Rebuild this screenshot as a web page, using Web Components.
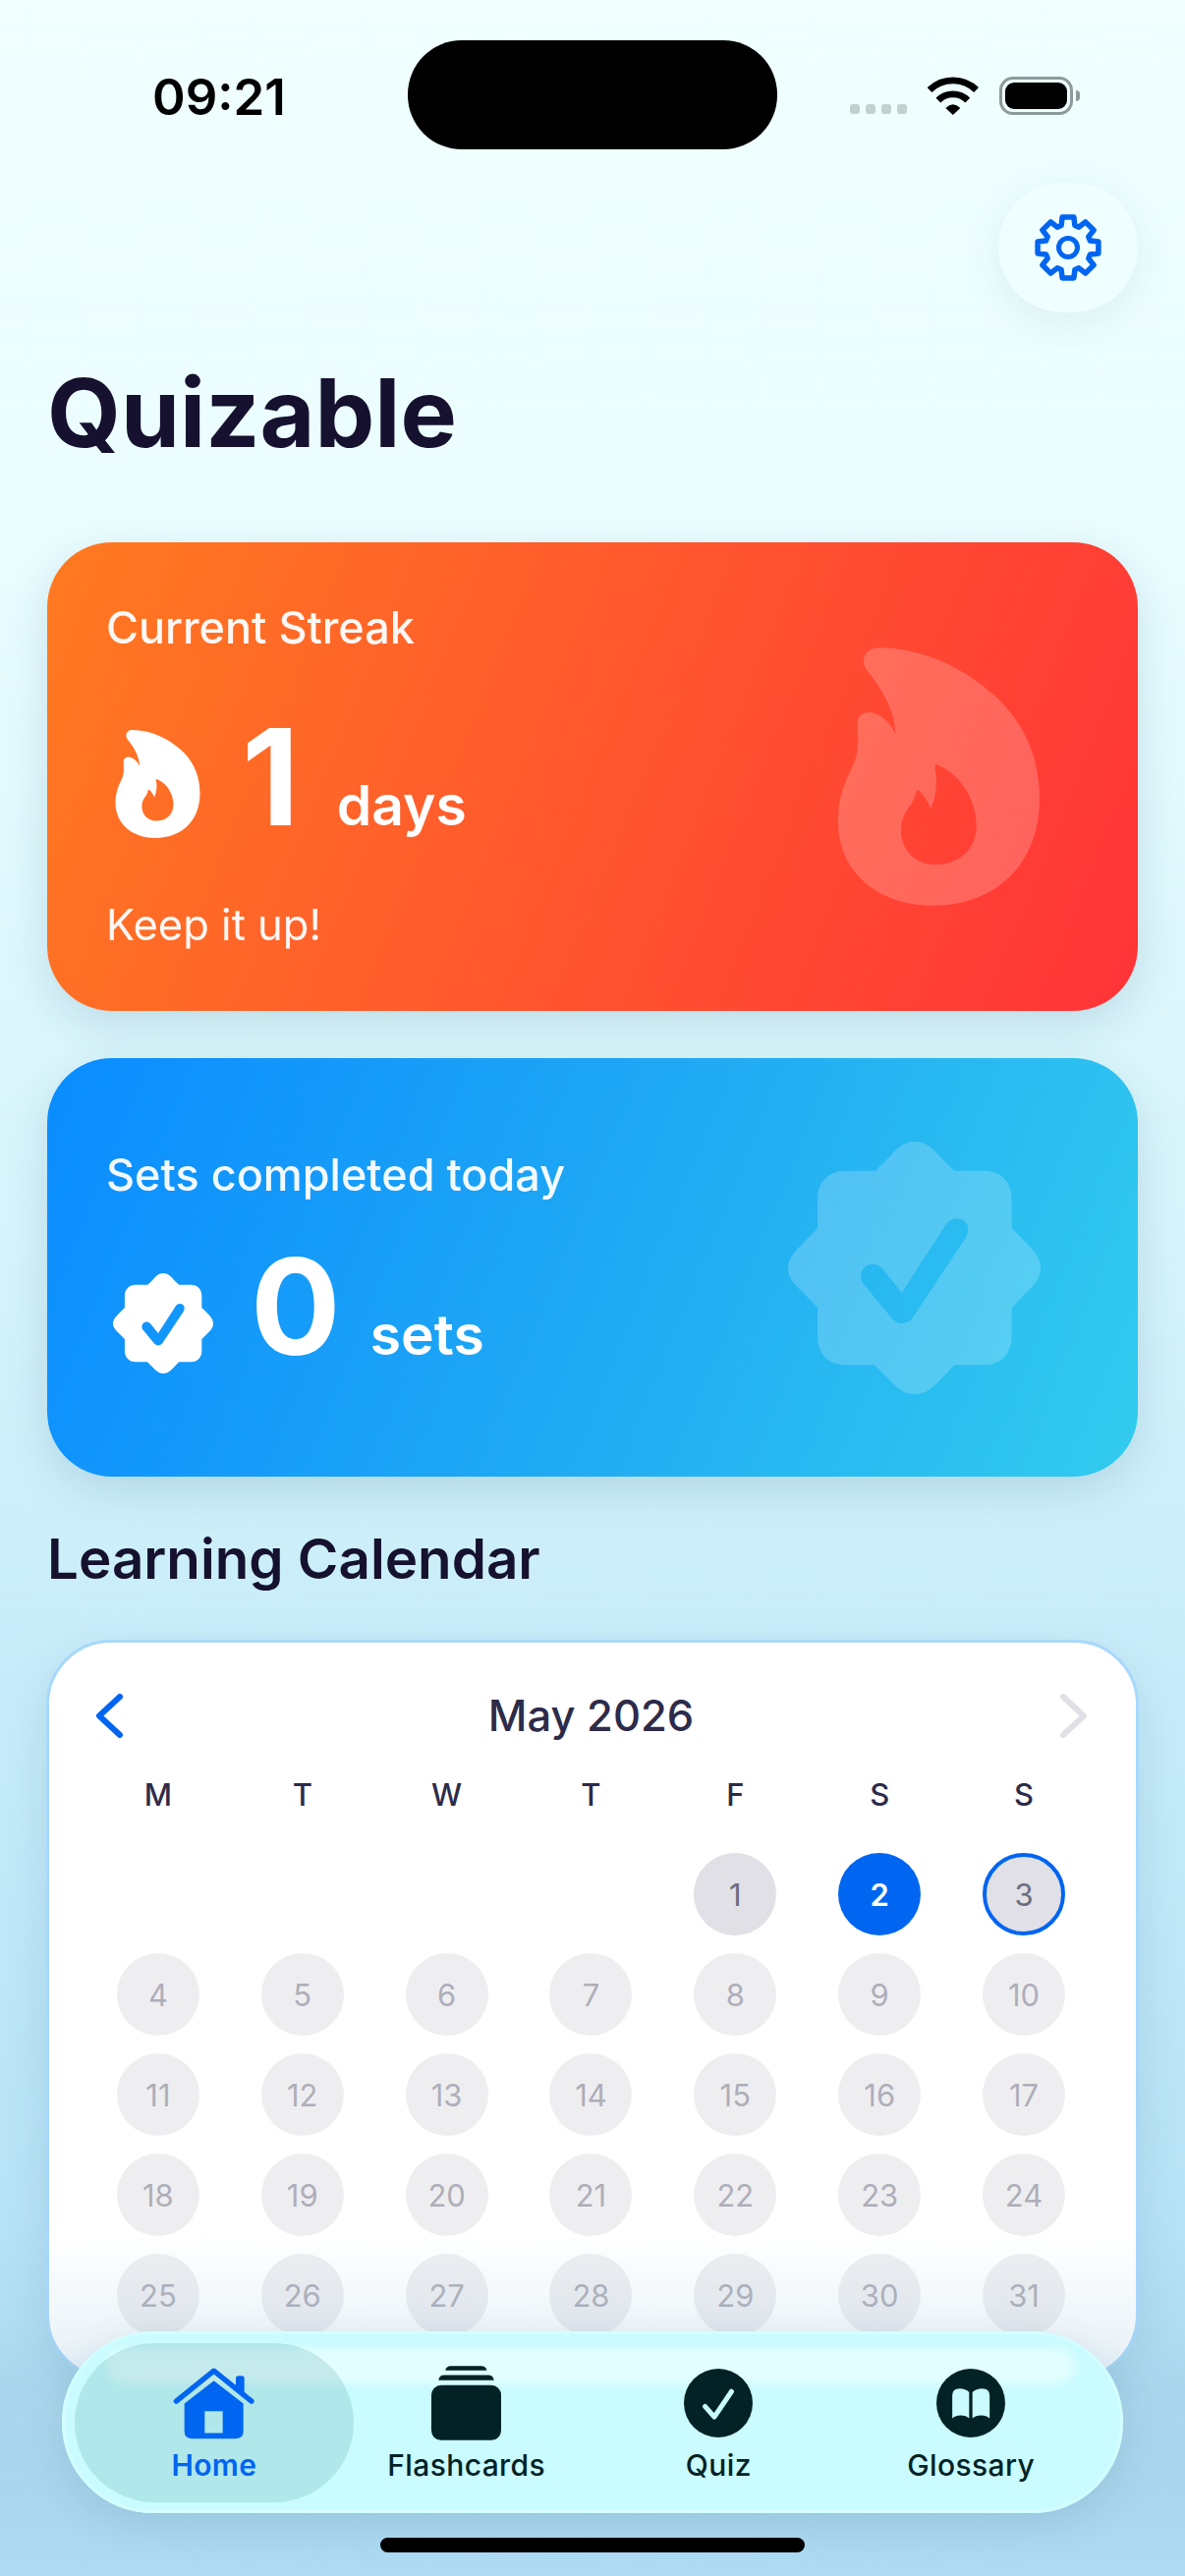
<!DOCTYPE html>
<html lang="en">
<head>
<meta charset="utf-8">
<title>Quizable</title>
<style>
    html, body { margin: 0; padding: 0; }
    body { width: 1206px; height: 2622px; overflow: hidden; font-family: Inter, "Liberation Sans", sans-serif; }
</style>
</head>
<body>
<quiz-app>
    <status-bar></status-bar>
    <settings-button></settings-button>
    <page-title>Quizable</page-title>
    <stat-card kind="streak">
        <span slot="label">Current Streak</span>
        <span slot="value">1</span>
        <span slot="unit">days</span>
        <span slot="note">Keep it up!</span>
    </stat-card>
    <stat-card kind="sets">
        <span slot="label">Sets completed today</span>
        <span slot="value">0</span>
        <span slot="unit">sets</span>
    </stat-card>
    <section-title>Learning Calendar</section-title>
    <learning-calendar month="May 2026"></learning-calendar>
    <tab-bar slot="overlay">
        <tab-item icon="home" active>Home</tab-item>
        <tab-item icon="cards">Flashcards</tab-item>
        <tab-item icon="quiz">Quiz</tab-item>
        <tab-item icon="book">Glossary</tab-item>
    </tab-bar>
</quiz-app>

<script>
// all icons are drawn in the coordinates of the crop they were traced from
const FLAME = `M345 58C480 58 620 125 720 225C800 310 835 410 835 520C835 720 700 845 510 845C340 845 220 740 220 590C220 500 250 450 268 410C285 370 280 330 279 290C279 265 295 255 315 255C345 255 378 285 395 320C395 250 350 180 318 140C305 125 298 115 298 100C298 72 318 58 345 58Z
M520 415C590 440 642 520 642 600C642 675 590 720 515 720C455 720 412 675 412 615C412 580 425 560 440 540C450 525 455 510 458 498C460 490 466 492 470 497C482 510 495 530 503 548C515 525 520 490 520 460C519 445 516 432 516 422C516 416 518 414 520 415Z`;
const BADGE = `M452 66C490 66 510 90 535 118L573 155L665 155C715 155 748 190 748 240L748 330L790 372C815 398 836 420 836 452C836 485 815 505 790 530L748 572L748 662C748 712 715 747 665 747L573 747L535 787C510 812 490 836 452 836C415 836 395 812 370 787L330 747L240 747C190 747 156 712 156 662L156 572L115 530C90 505 66 485 66 452C66 420 90 398 115 372L156 330L156 240C156 190 190 155 240 155L332 155L370 118C395 90 415 66 452 66Z
M296 500C280 478 290 450 312 442C330 436 345 443 355 455L413 527L545 322C555 305 575 295 595 303C618 313 620 340 607 360L448 600C438 615 425 620 413 620C400 620 390 612 380 602Z`;

function gearPath(cx, cy, outer, inner) {
    // eight teeth, one every 45 degrees
    let d = '';
    for (let i = 0; i < 8; i++) {
        const a = i * Math.PI / 4 - Math.PI / 2;
        const pts = [[inner, -0.30], [outer, -0.19], [outer, 0.19], [inner, 0.30]];
        for (const [r, o] of pts) {
            const x = cx + r * Math.cos(a + o), y = cy + r * Math.sin(a + o);
            d += (d ? 'L' : 'M') + x.toFixed(1) + ' ' + y.toFixed(1);
        }
    }
    return d + 'Z';
}

const ICONS = {
    flame: {box: '220 58 615 787', body: `<path fill="currentColor" fill-rule="evenodd" d="${FLAME}"/>`},
    badge: {box: '66 66 770 770', body: `<path fill="currentColor" fill-rule="evenodd" d="${BADGE}"/>`},
    gear: {box: '0 0 70 70', body: `<path fill="none" stroke="currentColor" stroke-width="5.5" stroke-linejoin="round" d="${gearPath(35, 35, 31.5, 23.5)}"/><circle cx="35" cy="35" r="9.5" fill="none" stroke="currentColor" stroke-width="5"/>`},
    home: {box: '345 110 255 230', body: `<path fill="none" stroke="currentColor" stroke-width="16" stroke-linecap="round" stroke-linejoin="round" d="M358 218L473 125L588 218"/><path fill="currentColor" d="M540 185V148Q540 140 548 140H558Q566 140 566 148V205Z"/><path fill="currentColor" fill-rule="evenodd" d="M383 225L473 155L563 225V310Q563 332 541 332H405Q383 332 383 310ZM445 248V315H500V248Z"/>`},
    cards: {box: '1140 108 214 228', body: `<path fill="currentColor" d="M1183 122Q1185 108 1200 108H1293Q1308 108 1310 122ZM1162 152Q1164 136 1180 136H1314Q1330 136 1332 152Z"/><rect x="1140" y="167" width="214" height="169" rx="30" fill="currentColor"/>`},
    quiz: {box: '231 121 208 208', body: `<circle cx="335" cy="225" r="104" fill="currentColor"/><path fill="none" stroke="#c9fbff" stroke-width="15" stroke-linecap="round" stroke-linejoin="round" d="M295 235L323 267L375 190"/>`},
    book: {box: '1002 121 208 208', body: `<circle cx="1106" cy="225" r="104" fill="currentColor"/><path fill="#c9fbff" d="M1050 202Q1050 181 1072 181Q1091 181 1101 192V271Q1092 262 1075 262Q1060 262 1050 271ZM1163 202Q1163 181 1141 181Q1122 181 1111 192V271Q1120 262 1138 262Q1153 262 1163 271Z"/>`},
};

class AppIcon extends HTMLElement {
    connectedCallback() {
        const icon = ICONS[this.getAttribute('name')];
        this.attachShadow({mode: 'open'});
        this.shadowRoot.innerHTML = `
            <style>
            :host { display: block; }
            svg { display: block; width: 100%; height: 100%; }
            </style>
            <svg viewBox="${icon.box}" xmlns="http://www.w3.org/2000/svg">${icon.body}</svg>
        `;
    }
}

class QuizApp extends HTMLElement {
    constructor() {
        super();
        this.attachShadow({mode: 'open'});
        this.shadowRoot.innerHTML = `
            <style>
            :host {
                display: flex;
                flex-direction: column;
                position: relative;
                width: 1206px;
                height: 2622px;
                box-sizing: border-box;
                padding: 0 48px;
                overflow: hidden;
                background: linear-gradient(180deg, #f0ffff 0%, #ebfdff 20%, #d4f3fb 50%, #bfe8f8 75%, #b0dcf4 100%);
            }
            /* edge fade over the scrolled content, under the tab bar */
            .fade {
                position: absolute;
                left: 0;
                right: 0;
                bottom: 0;
                height: 350px;
                pointer-events: none;
                background: linear-gradient(180deg, rgba(150,195,220,0) 0%, rgba(150,195,220,.17) 30%, rgba(150,195,220,.33) 44%, rgba(150,195,220,.28) 75%, rgba(160,205,232,.1) 100%);
            }
            .home-bar {
                position: absolute;
                left: 387px;
                top: 2583px;
                width: 432px;
                height: 15px;
                border-radius: 8px;
                background: #000;
            }
            </style>
            <slot></slot>
            <div class="fade"></div>
            <slot name="overlay"></slot>
            <div class="home-bar"></div>
        `;
    }
}

class StatusBar extends HTMLElement {
    constructor() {
        super();
        this.attachShadow({mode: 'open'});
        this.shadowRoot.innerHTML = `
            <style>
            :host {
                display: block;
                margin: 0 -48px;
                padding-top: 41px;
            }
            .row {
                display: grid;
                grid-template-columns: 415px 376px 1fr;
                height: 111px;
            }
            .time {
                font: 600 51px/1 Inter, "Liberation Sans", sans-serif;
                color: #000;
                padding: 32px 0 0 155px;
            }
            .island { background: #000; border-radius: 55px; }
            .right { position: relative; display: flex; padding: 37px 0 0 74px; align-items: flex-start; }
            .dots { display: flex; gap: 6px; margin-top: 28px; }
            .dots i { width: 10px; height: 10px; border-radius: 3px; background: #c2d0d0; }
            .wifi { width: 52px; height: 40px; margin-left: 21px; }
            .battery {
                box-sizing: border-box;
                width: 75px;
                height: 39px;
                margin-left: 21px;
                border: 3px solid #8e9a9a;
                border-radius: 14px;
                padding: 3px;
            }
            .battery b { display: block; height: 100%; background: #000; border-radius: 9px; }
            .cap { width: 4px; height: 11px; margin: 14px 0 0 3px; background: #8e9a9a; border-radius: 0 4px 4px 0; }
            </style>
            <div class="row">
                <div class="time">09:21</div>
                <div class="island"></div>
                <div class="right">
                    <div class="dots"><i></i><i></i><i></i><i></i></div>
                    <svg class="wifi" viewBox="375 114 153 116">
                        <path fill="none" stroke="#000" stroke-width="20" d="M381 153A100 100 0 0 1 521 153"/>
                        <path fill="none" stroke="#000" stroke-width="20" d="M407 184A62 62 0 0 1 495 184"/>
                        <path d="M429 207Q451 186 473 207L451 228Z"/>
                    </svg>
                    <div class="battery"><b></b></div>
                    <div class="cap"></div>
                </div>
            </div>
        `;
    }
}

class SettingsButton extends HTMLElement {
    constructor() {
        super();
        this.attachShadow({mode: 'open'});
        this.shadowRoot.innerHTML = `
            <style>
            :host {
                display: flex;
                align-items: center;
                justify-content: center;
                align-self: flex-end;
                width: 142px;
                height: 132px;
                margin-top: 34px;
                border-radius: 66px;
                background: #efffff;
                color: #0065f0;
                box-shadow: 0 10px 40px rgba(40,90,100,.09);
            }
            app-icon { width: 70px; height: 70px; }
            </style>
            <app-icon name="gear"></app-icon>
        `;
    }
}

class PageTitle extends HTMLElement {
    constructor() {
        super();
        this.attachShadow({mode: 'open'});
        this.shadowRoot.innerHTML = `
            <style>
            :host {
                display: block;
                margin-top: 44px;
                height: 118px;
                font: 700 96.5px/116px Inter, "Liberation Sans", sans-serif;
                color: #16112f;
            }
            </style>
            <slot></slot>
        `;
    }
}

class StatCard extends HTMLElement {
    constructor() {
        super();
        this.attachShadow({mode: 'open'});
        const streak = this.getAttribute('kind') === 'streak';
        const icon = streak ? 'flame' : 'badge';
        this.shadowRoot.innerHTML = `
            <style>
            :host {
                display: block;
                position: relative;
                box-sizing: border-box;
                margin-top: ${streak ? 72 : 48}px;
                padding: ${streak ? 60 : 92}px 60px ${streak ? 61 : 105}px;
                border-radius: 66px;
                color: #fff;
                background: ${streak
                    ? 'linear-gradient(112deg, #ff7a20 0%, #ff5a2d 45%, #ff3338 100%)'
                    : 'linear-gradient(112deg, #0a8cff 0%, #1fa8f4 50%, #32ccee 100%)'};
                box-shadow: 0 14px 44px rgba(40,90,120,.16);
            }
            .label { font: 500 45px/54px Inter, "Liberation Sans", sans-serif; opacity: .95; }
            .stat { display: flex; align-items: flex-start; margin-top: ${streak ? 57 : 39}px; height: 136px; }
            .small { flex: none; margin: ${streak ? '20px 0 0 9px' : '34px 0 0 7px'}; color: #fff; }
            .small.flame { width: 87px; height: 110px; }
            .small.badge { width: 102px; height: 102px; }
            .value { font: 700 136px/136px Inter, "Liberation Sans", sans-serif; margin-left: ${streak ? 42 : 38}px; }
            .unit { font: 600 57px/136px Inter, "Liberation Sans", sans-serif; margin-left: ${streak ? 38 : 30}px; }
            .baseline { display: flex; align-items: baseline; }
            .note { font: 400 43.5px/54px Inter, "Liberation Sans", sans-serif; margin-top: 55px; opacity: .95; }
            .mark { position: absolute; color: rgba(255,255,255,.2); }
            .mark.flame { right: 100px; top: 107px; width: 205px; height: 263px; }
            .mark.badge { right: 99px; top: 85px; width: 257px; height: 257px; }
            </style>
            <div class="label"><slot name="label"></slot></div>
            <div class="stat">
                <app-icon class="small ${icon}" name="${icon}"></app-icon>
                <div class="baseline">
                    <div class="value"><slot name="value"></slot></div>
                    <div class="unit"><slot name="unit"></slot></div>
                </div>
            </div>
            ${streak ? '<div class="note"><slot name="note"></slot></div>' : ''}
            <app-icon class="mark ${icon}" name="${icon}"></app-icon>
        `;
    }
}

class SectionTitle extends HTMLElement {
    constructor() {
        super();
        this.attachShadow({mode: 'open'});
        this.shadowRoot.innerHTML = `
            <style>
            :host {
                display: block;
                margin-top: 50px;
                font: 600 56.5px/68px Inter, "Liberation Sans", sans-serif;
                color: #16112f;
            }
            </style>
            <slot></slot>
        `;
    }
}

class LearningCalendar extends HTMLElement {
    connectedCallback() {
        this.attachShadow({mode: 'open'});
        const days = [];
        for (let i = 0; i < 4; i++) days.push('<span></span>');
        for (let d = 1; d <= 31; d++) {
            let cls = 'day';
            if (d === 1) cls += ' past';
            if (d === 2) cls += ' selected';
            if (d === 3) cls += ' past today';
            days.push(`<span class="${cls}">${d}</span>`);
        }
        const heads = ['M', 'T', 'W', 'T', 'F', 'S', 'S'].map(h => `<b>${h}</b>`).join('');
        this.shadowRoot.innerHTML = `
            <style>
            :host {
                display: block;
                box-sizing: border-box;
                flex: none;
                margin: 48px -1px 0;
                padding: 47px 40.5px 41px 37.5px;
                border: 3px solid #a8d8fb;
                border-radius: 66px;
                background: #fff;
                font-family: Inter, "Liberation Sans", sans-serif;
                box-shadow: 0 14px 44px rgba(40,90,120,.14);
            }
            header {
                display: flex;
                align-items: center;
                justify-content: space-between;
                height: 54px;
                padding: 0 10px;
                font: 500 43.5px/54px Inter, "Liberation Sans", sans-serif;
                color: #2d2b4a;
            }
            svg { width: 27px; height: 45px; display: block; fill: none; stroke-width: 6; stroke-linecap: round; stroke-linejoin: round; }
            .heads, .days { display: grid; grid-template-columns: repeat(7, 1fr); justify-items: center; }
            .heads { margin-top: 34px; font: 500 31px/40px Inter, "Liberation Sans", sans-serif; color: #2d2b4a; }
            .heads b { font-weight: 500; }
            .days { margin-top: 39px; row-gap: 18px; }
            .days span { width: 84px; height: 84px; box-sizing: border-box; }
            .day {
                display: flex;
                align-items: center;
                justify-content: center;
                border-radius: 50%;
                background: #eeeef1;
                color: #aeaeb9;
                font-size: 31px;
            }
            .past { background: #e0e0e6; color: #6c6c80; }
            .selected { background: #0065f0; color: #fff; font-weight: 600; }
            .today { border: 4px solid #0065f0; }
            </style>
            <header>
                <svg viewBox="0 0 27 45"><path stroke="#0065f0" d="M24 3L3 22.5L24 42" /></svg>
                <span>${this.getAttribute('month')}</span>
                <svg viewBox="0 0 27 45"><path stroke="#e0e0e6" d="M3 3L24 22.5L3 42" /></svg>
            </header>
            <div class="heads">${heads}</div>
            <div class="days">${days.join('')}</div>
        `;
    }
}

class TabBar extends HTMLElement {
    constructor() {
        super();
        this.attachShadow({mode: 'open'});
        this.shadowRoot.innerHTML = `
            <style>
            :host {
                display: grid;
                grid-template-columns: repeat(4, 1fr);
                position: absolute;
                left: 63px;
                top: 2373px;
                width: 1080px;
                height: 185px;
                box-sizing: border-box;
                padding: 0 26.5px;
                border-radius: 92px;
                background: #c9fbff;
                box-shadow: inset 0 0 0 3px #d4fdff, 0 12px 40px rgba(40,90,120,.14);
            }
            .shine {
                position: absolute;
                left: 45px;
                right: 48px;
                top: 17px;
                height: 36px;
                border-radius: 30px;
                background: #e2feff;
                filter: blur(5px);
            }
            </style>
            <div class="shine"></div>
            <slot></slot>
        `;
    }
}

class TabItem extends HTMLElement {
    constructor() {
        super();
        this.attachShadow({mode: 'open'});
        const name = this.getAttribute('icon');
        const sizes = {home: [85, 77], cards: [71, 76], quiz: [70, 70], book: [70, 70]};
        const [w, h] = sizes[name];
        this.shadowRoot.innerHTML = `
            <style>
            :host {
                display: block;
                position: relative;
                color: #032226;
                font: 500 30px/34px Inter, "Liberation Sans", sans-serif;
                letter-spacing: .4px;
                text-align: center;
            }
            :host([active]) { color: #0065f0; font-weight: 600; }
            :host([active]) .pill { display: block; }
            .pill {
                display: none;
                position: absolute;
                left: -14px;
                right: -14px;
                top: 12px;
                bottom: 11px;
                border-radius: 81px;
                background: rgba(0,100,100,.13);
            }
            .inner { position: relative; display: flex; flex-direction: column; align-items: center; height: 100%; }
            .icon { height: 76px; margin-top: 35px; display: flex; align-items: center; justify-content: center; }
            app-icon { width: ${w}px; height: ${h}px; }
            .label { margin-top: 8px; }
            </style>
            <div class="pill"></div>
            <div class="inner">
                <div class="icon"><app-icon name="${name}"></app-icon></div>
                <div class="label"><slot></slot></div>
            </div>
        `;
    }
}

customElements.define('app-icon', AppIcon);
customElements.define('quiz-app', QuizApp);
customElements.define('status-bar', StatusBar);
customElements.define('settings-button', SettingsButton);
customElements.define('page-title', PageTitle);
customElements.define('stat-card', StatCard);
customElements.define('section-title', SectionTitle);
customElements.define('learning-calendar', LearningCalendar);
customElements.define('tab-bar', TabBar);
customElements.define('tab-item', TabItem);
</script>
</body>
</html>
